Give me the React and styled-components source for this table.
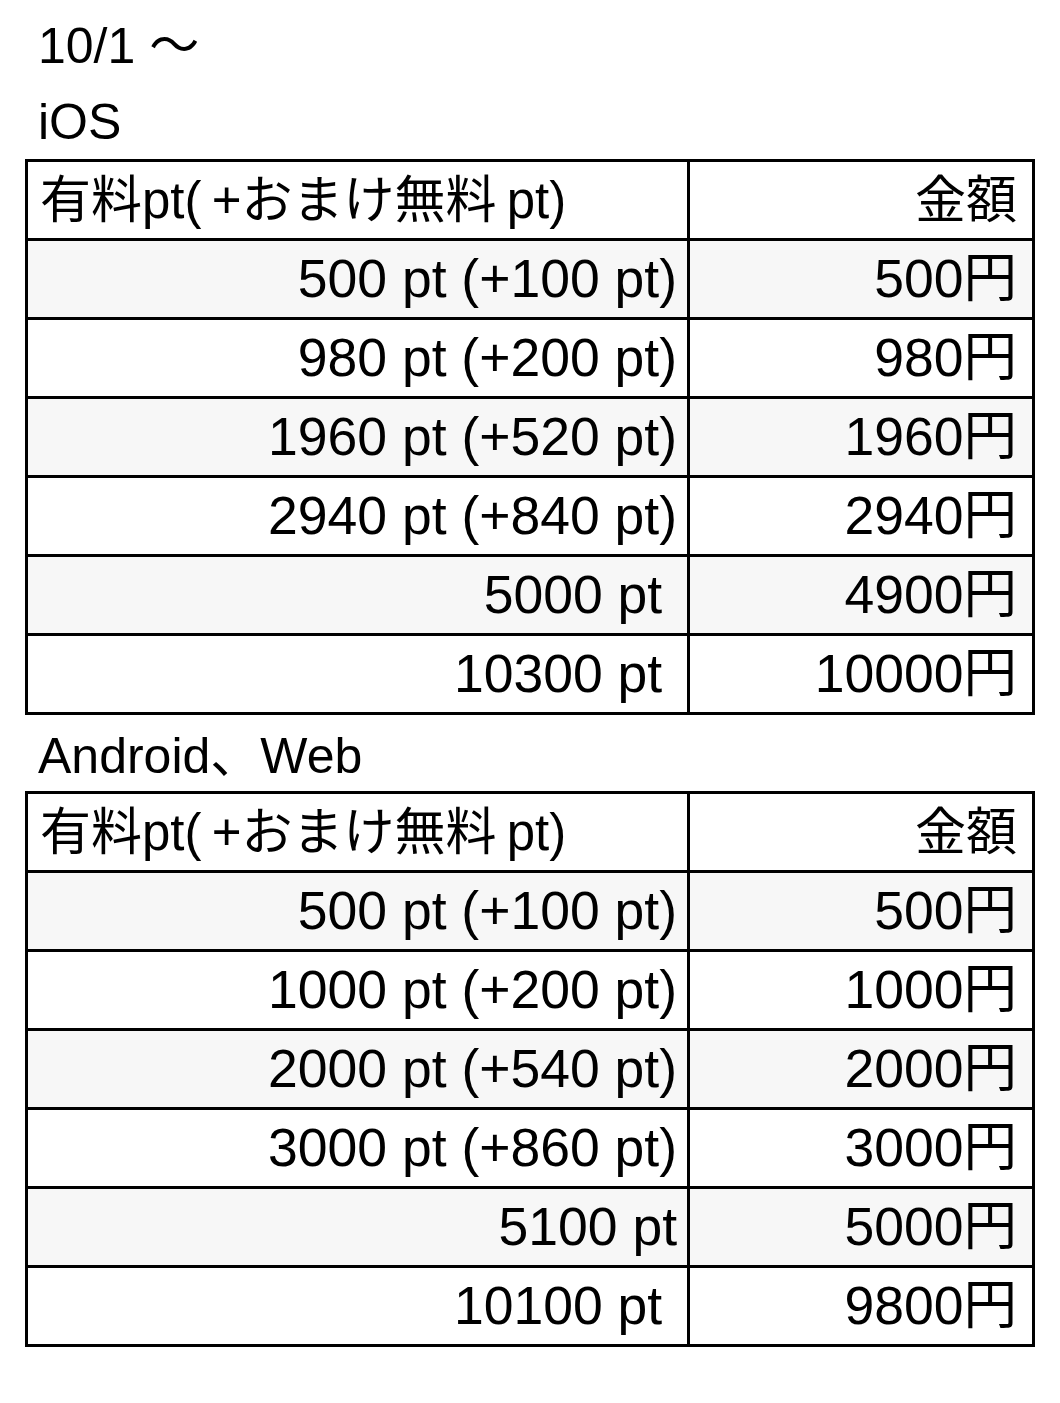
import React from "react";
import styled, { createGlobalStyle } from "styled-components";

const GlobalStyle = createGlobalStyle`
  html, body {
    margin: 0;
    padding: 0;
    background: #fff;
  }
  body {
    font-family: "Liberation Sans", "Noto Sans CJK JP", sans-serif;
    color: #000;
  }
`;

const ios = [
  ["500 pt (+100 pt)", "500円"],
  ["980 pt (+200 pt)", "980円"],
  ["1960 pt (+520 pt)", "1960円"],
  ["2940 pt (+840 pt)", "2940円"],
  ["5000 pt\u00a0", "4900円"],
  ["10300 pt\u00a0", "10000円"],
];

const android = [
  ["500 pt (+100 pt)", "500円"],
  ["1000 pt (+200 pt)", "1000円"],
  ["2000 pt (+540 pt)", "2000円"],
  ["3000 pt (+860 pt)", "3000円"],
  ["5100 pt", "5000円"],
  ["10100 pt\u00a0", "9800円"],
];

function PriceTable({ rows }) {
  return (
    <Table>
      <colgroup>
        <Col $w={662} />
        <Col $w={345} />
      </colgroup>
      <tbody>
        <Row>
          <Cell $head $align="left">有料pt(&thinsp;+おまけ無料&thinsp;pt)</Cell>
          <Cell $head $right>金額</Cell>
        </Row>
        {rows.map(([pt, yen], i) => (
          <Row key={i} $striped={i % 2 === 0}>
            <Cell>{pt}</Cell>
            <Cell $right>{yen}</Cell>
          </Row>
        ))}
      </tbody>
    </Table>
  );
}

export default function App() {
  return (
    <>
      <GlobalStyle />
      <Page>
        <Label $top={16}>10/1 〜</Label>
        <Label $top={16} $bottom={7}>iOS</Label>
        <PriceTable rows={ios} />
        <Label $top={11} $bottom={5}>Android、Web</Label>
        <PriceTable rows={android} />
      </Page>
    </>
  );
}

const Page = styled.div`
  display: flex;
  flex-direction: column;
  padding: 0 25px 60px 25px;
`;

const Label = styled.div`
  font-size: 50px;
  line-height: 60px;
  padding-left: 13px;
  margin-top: ${(p) => p.$top || 0}px;
  margin-bottom: ${(p) => p.$bottom || 0}px;
  white-space: pre;
`;

const Table = styled.table`
  width: 1007px;
  border-collapse: collapse;
  table-layout: fixed;
  border: 3px solid #000;
  font-size: 53.5px;
`;

const Col = styled.col`
  width: ${(p) => p.$w}px;
`;

const Row = styled.tr`
  height: 79px;
  background: ${(p) => (p.$striped ? "#f7f7f7" : "#fff")};
`;

const Cell = styled.td`
  border: 3px solid #000;
  padding: 0 ${(p) => (p.$right ? 15 : 10)}px 0 12px;
  font-size: ${(p) => (p.$head ? "51px" : "inherit")};
  text-align: ${(p) => p.$align || "right"};
  vertical-align: middle;
  white-space: pre;
  line-height: 1;
  overflow: hidden;
`;
